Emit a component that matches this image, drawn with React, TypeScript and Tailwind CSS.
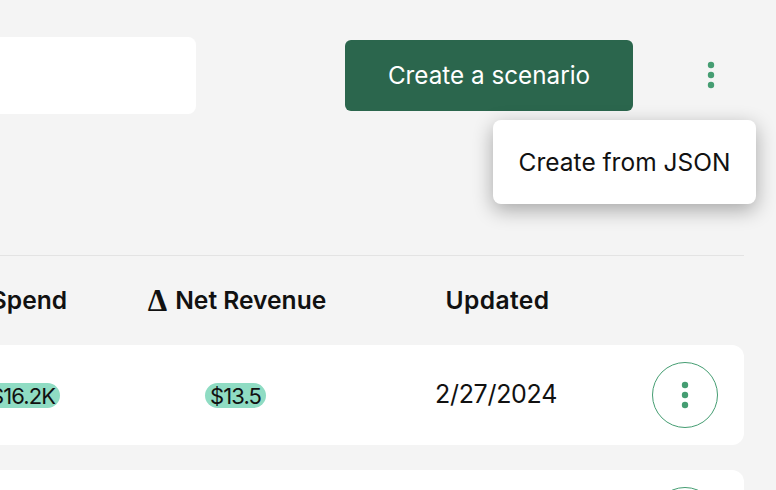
const font = { fontFamily: '"Inter", "Liberation Sans", sans-serif' };

function Dots({ className }: { className: string }) {
  return (
    <svg width="8" height="28" viewBox="0 0 8 28" className={className} fill="currentColor">
      <circle cx="4" cy="4" r="3.2" />
      <circle cx="4" cy="14" r="3.2" />
      <circle cx="4" cy="24" r="3.2" />
    </svg>
  );
}

function Pill({ children, className = "" }: { children: React.ReactNode; className?: string }) {
  return (
    <span className={`inline-flex h-[25px] items-center rounded-full bg-[#8fdcc3] px-[5px] pt-px text-[22px] leading-none tracking-[-0.9px] text-[#111] ${className}`}>
      {children}
    </span>
  );
}

function Row() {
  return (
    <div className="ml-[-70px] flex h-[100px] w-[814px] items-center rounded-[12px] bg-white">
      <div className="flex w-[176px] justify-center pl-[9px]"><Pill>$16.2K</Pill></div>
      <div className="flex w-[262px] justify-center pr-[3px]"><Pill>$13.5</Pill></div>
      <div className="flex w-[259px] justify-center pr-[3px] text-[25px] tracking-[-0.3px] text-[#111]">2/27/2024</div>
      <div className="flex w-[117px] justify-center pr-[2px]">
        <button className="flex h-[66px] w-[66px] items-center justify-center rounded-full border border-[#459d72] text-[#459d72]">
          <Dots className="" />
        </button>
      </div>
    </div>
  );
}

export default function App() {
  return (
    <div style={font} className="relative h-[490px] w-[776px] overflow-hidden bg-[#f4f4f4]">
      <div className="flex items-start pt-[37px]">
        <div className="h-[77px] w-[196px] rounded-r-[8px] bg-white" />
        <button className="ml-[149px] mt-[3px] h-[71px] w-[288px] rounded-[6px] bg-[#2b664d] pt-[2px] text-[24.25px] text-white">
          Create a scenario
        </button>
        <div className="ml-[74px] mt-[24px] text-[#459d72]">
          <Dots className="" />
        </div>
      </div>

      <div className="absolute left-[493px] top-[120px] flex h-[84px] w-[263px] items-center justify-center rounded-[8px] bg-white pt-px text-[24.5px] text-[#111] shadow-[0_6px_20px_rgba(0,0,0,0.32)]">
        Create from JSON
      </div>

      <div className="mt-[141px] h-px w-[744px] bg-[#e3e3e3]" />

      <div className="ml-[-70px] flex h-[89px] w-[814px] items-center text-[24.6px] font-semibold text-[#111]">
        <div className="flex w-[176px] justify-center pl-[22px]">Spend</div>
        <div className="flex w-[262px] justify-center">
          <span className="flex items-center gap-[8px]">
            <span style={{ fontFamily: '"Liberation Serif", serif' }} className="text-[31px] leading-none font-bold">Δ</span>
            <span>Net Revenue</span>
          </span>
        </div>
        <div className="flex w-[259px] justify-center tracking-[0.4px]">Updated</div>
        <div className="w-[117px]" />
      </div>

      <div className="flex flex-col gap-[25px]">
        <Row />
        <Row />
      </div>
    </div>
  );
}
